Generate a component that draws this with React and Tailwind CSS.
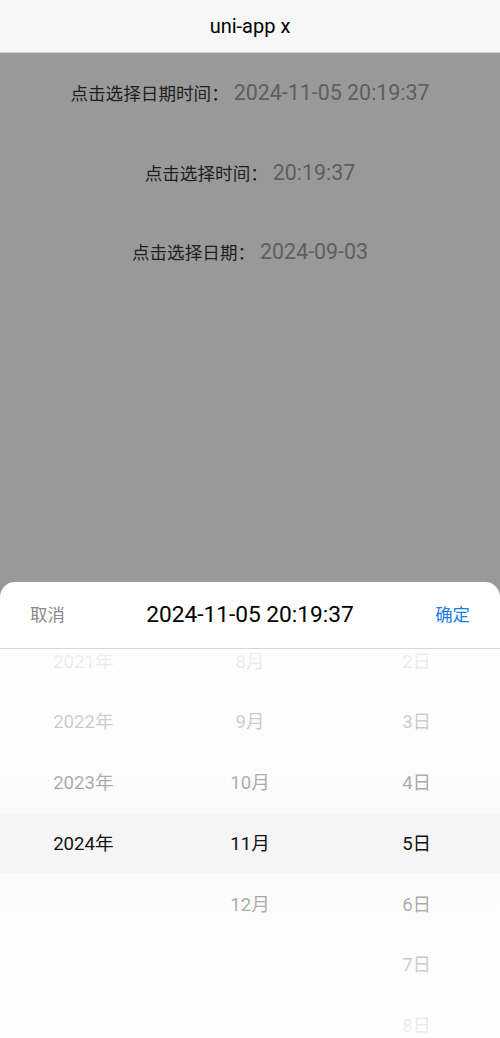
import React from "react";

const FONT = { fontFamily: 'Roboto, "Noto Sans CJK SC", sans-serif' };

function Row({ label, value }) {
  return (
    <div className="h-[79.5px] flex items-center justify-center pt-[1px]">
      <div className="flex items-baseline">
        <span className="text-[17.6px] text-[#1f1f1f]">{label}</span>
        <span className="ml-[5px] text-[21.4px] text-[#5e5e5e]">{value}</span>
      </div>
    </div>
  );
}

function Column({ items, selected }) {
  return (
    <div className="flex flex-col mt-[-16.6px]">
      {items.map((it) => (
        <div
          key={it}
          className={
            "h-[60.7px] shrink-0 flex items-center justify-center text-[18.6px] " +
            (it === selected ? "text-[#111]" : "text-black")
          }
        >
          {it}
        </div>
      ))}
    </div>
  );
}

export default function App() {
  return (
    <div className="w-[500px] h-[1038px] flex flex-col overflow-hidden" style={FONT}>
      <div className="h-[53px] shrink-0 bg-[#f7f7f7] border-b border-[#d4d4d4] flex items-center justify-center">
        <span className="text-[20px] text-black">uni-app x</span>
      </div>
      <div className="flex-1 flex flex-col bg-[#999999]">
        <div className="flex-1 flex flex-col">
          <Row label="点击选择日期时间：" value="2024-11-05 20:19:37" />
          <Row label="点击选择时间：" value="20:19:37" />
          <Row label="点击选择日期：" value="2024-09-03" />
        </div>
        <div className="h-[456px] shrink-0 bg-white rounded-t-[15px] flex flex-col overflow-hidden">
          <div className="h-[67px] shrink-0 flex items-center justify-between px-[30px] border-b border-[#d6d6d6]">
            <span className="text-[17.4px] text-[#888]">取消</span>
            <span className="text-[22.7px] text-black">2024-11-05 20:19:37</span>
            <span className="text-[17.4px] text-[#1a7ee6]">确定</span>
          </div>
          <div className="relative h-[389px] overflow-hidden bg-[#f5f5f5]">
            <div className="grid grid-cols-3">
              <Column items={["2021年", "2022年", "2023年", "2024年"]} selected="2024年" />
              <Column items={["8月", "9月", "10月", "11月", "12月"]} selected="11月" />
              <Column items={["2日", "3日", "4日", "5日", "6日", "7日", "8日"]} selected="5日" />
            </div>
            <div className="absolute left-0 right-0 top-0 h-[164px] bg-[linear-gradient(180deg,rgba(255,255,255,0.95),rgba(255,255,255,0.6))]" />
            <div className="absolute left-0 right-0 bottom-0 h-[165px] bg-[linear-gradient(0deg,rgba(255,255,255,0.95),rgba(255,255,255,0.6))]" />
          </div>
        </div>
      </div>
    </div>
  );
}
